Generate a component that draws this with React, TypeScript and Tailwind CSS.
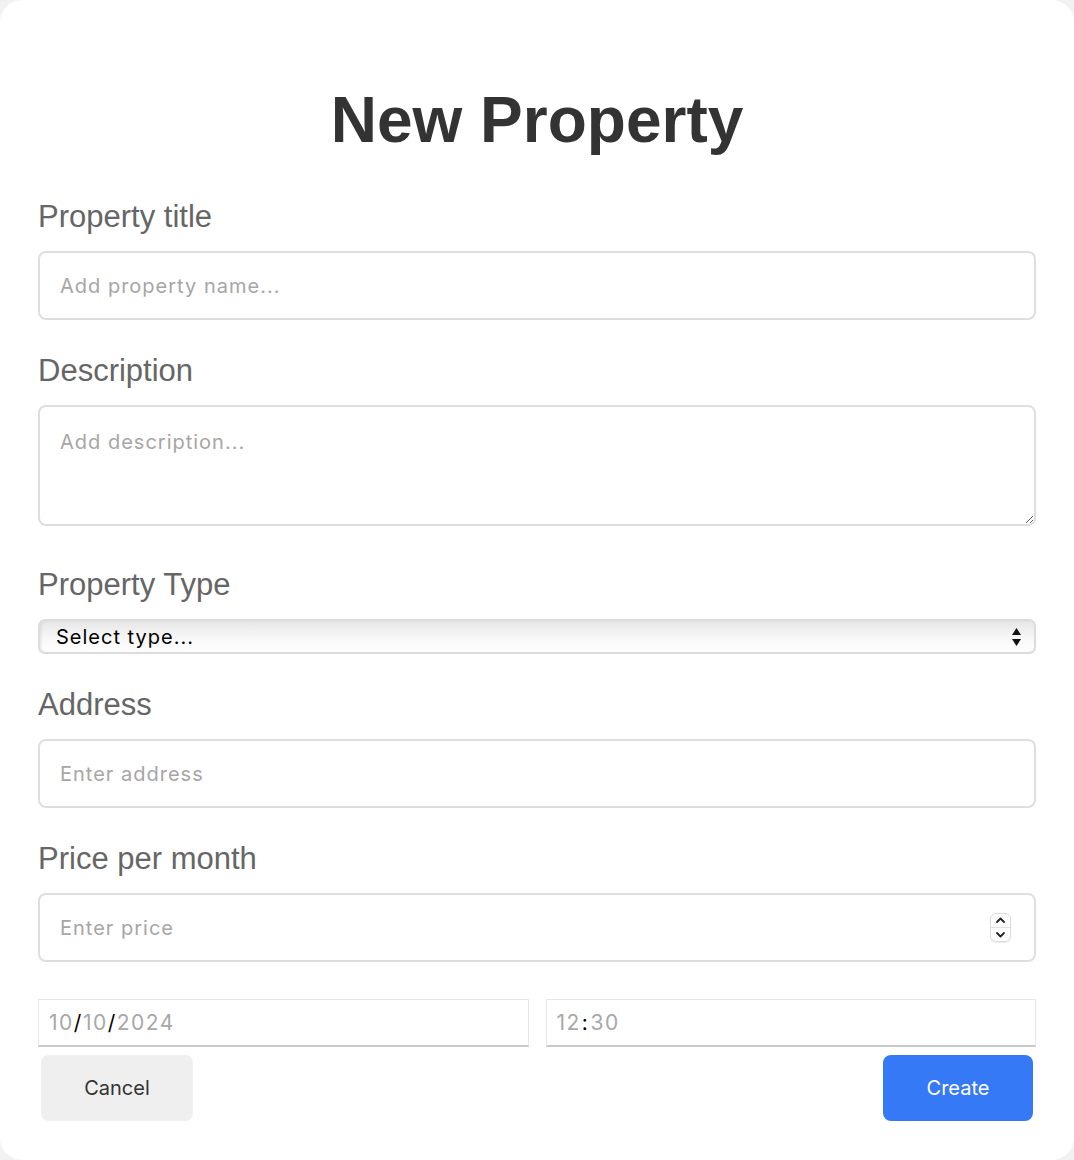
import type { FC, ReactNode } from 'react';

const labelCls =
  "block text-[31px] leading-[36px] text-[#666] font-['Liberation_Sans',Arial,sans-serif]";
const inputCls =
  "w-full h-[69px] rounded-[8px] border-2 border-[#dedede] bg-white px-[20px] text-[20px] tracking-[1px] text-[#333] outline-none placeholder:text-[#a6a6a6] font-['Inter',sans-serif]";

const Field: FC<{ label: string; className?: string; children: ReactNode }> = ({ label, className, children }) => (
  <div className={className}>
    <label className={labelCls}>{label}</label>
    <div className="mt-[16px]">{children}</div>
  </div>
);

const Spinner = () => (
  <div className="absolute right-[25px] top-[20px] flex h-[29px] w-[21px] flex-col items-center justify-center rounded-[6px] border border-[#dcdcdc] bg-white shadow-[0_1px_1px_rgba(0,0,0,0.08)]">
    <svg width="11" height="8" viewBox="0 0 11 8" className="mb-[3px]">
      <path d="M2 6 L5.5 2.5 L9 6" fill="none" stroke="#222" strokeWidth="1.8" strokeLinecap="round" strokeLinejoin="round" />
    </svg>
    <div className="h-px w-full bg-[#e2e2e2]" />
    <svg width="11" height="8" viewBox="0 0 11 8" className="mt-[3px]">
      <path d="M2 2 L5.5 5.5 L9 2" fill="none" stroke="#222" strokeWidth="1.8" strokeLinecap="round" strokeLinejoin="round" />
    </svg>
  </div>
);

export default function App() {
  return (
    <div className="min-h-[1160px] bg-[#f2f2f2]">
      <div className="h-[1160px] w-full rounded-[22px] bg-white px-[38px] pt-[83px]">
        <h1 className="text-center text-[64px] font-bold leading-[74px] text-[#333] font-['Liberation_Sans',Arial,sans-serif]">
          New Property
        </h1>

        <Field label="Property title" className="mt-[42px]">
          <input className={inputCls} placeholder="Add property name..." />
        </Field>

        <Field label="Description" className="mt-[33px]">
          <textarea
            className="block h-[121px] w-full resize-y rounded-[8px] border-2 border-[#dedede] bg-white px-[20px] pt-[22px] text-[20px] leading-[26px] tracking-[1px] text-[#333] outline-none placeholder:text-[#a6a6a6] font-['Inter',sans-serif]"
            placeholder="Add description..."
          />
        </Field>

        <Field label="Property Type" className="mt-[41px]">
          <div className="flex h-[35px] w-full items-center justify-between rounded-[7px] border-2 border-[#dcdcdc] bg-gradient-to-b from-[#e6e6e6] via-[#f6f6f6] to-[#ffffff] pl-[16px] pr-[12px] shadow-[inset_2px_0_2px_rgba(0,0,0,0.06)]">
            <span className="text-[20px] tracking-[1px] text-black font-['Inter',sans-serif]">Select type...</span>
            <svg width="11" height="22" viewBox="0 0 11 22">
              <path d="M5.5 2 L10 9 L1 9 Z" fill="#111" />
              <path d="M1 13 L10 13 L5.5 20 Z" fill="#111" />
            </svg>
          </div>
        </Field>

        <Field label="Address" className="mt-[33px]">
          <input className={inputCls} placeholder="Enter address" />
        </Field>

        <Field label="Price per month" className="mt-[33px]">
          <div className="relative">
            <input className={inputCls} placeholder="Enter price" />
            <Spinner />
          </div>
        </Field>

        <div className="mt-[37px] flex gap-[17px]">
          <div className="flex h-[48px] flex-1 items-center border border-[#e6e6e6] border-b-2 border-b-[#c9c9c9] bg-white pl-[10px] text-[21px] tracking-[1.5px] text-[#a8a8a8] font-['Inter',sans-serif]">
            10<span className="text-black">/</span>10<span className="text-black">/</span>2024
          </div>
          <div className="flex h-[48px] flex-1 items-center border border-[#e6e6e6] border-b-2 border-b-[#c9c9c9] bg-white pl-[10px] text-[21px] tracking-[1.5px] text-[#a8a8a8] font-['Inter',sans-serif]">
            12<span className="px-[1px] text-black">:</span>30
          </div>
        </div>

        <div className="mt-[8px] flex justify-between px-[3px]">
          <button className="h-[66px] w-[152px] rounded-[8px] bg-[#efefef] text-[20px] text-[#333] font-['Inter',sans-serif]">
            Cancel
          </button>
          <button className="h-[66px] w-[150px] rounded-[8px] bg-[#3579f6] text-[20px] text-white font-['Inter',sans-serif]">
            Create
          </button>
        </div>
      </div>
    </div>
  );
}
